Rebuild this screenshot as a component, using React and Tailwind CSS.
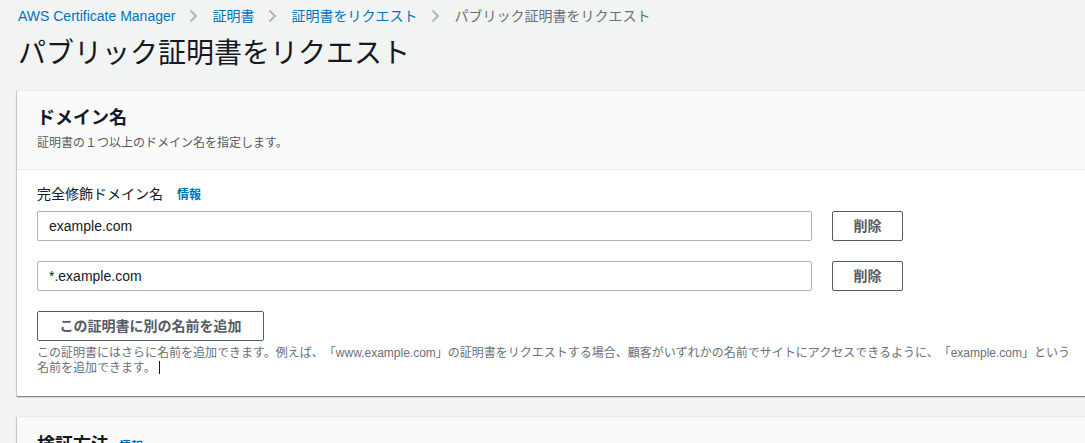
const FONT = "font-['Liberation_Sans','Noto_Sans_CJK_JP',sans-serif]";

const Chevron = () => (
  <svg width="9" height="14" viewBox="0 0 9 14" className="shrink-0">
    <path d="M1.5 1.5 L7 7 L1.5 12.5" fill="none" stroke="#aab7b8" strokeWidth="2" />
  </svg>
);

const crumbs = ['AWS Certificate Manager', '証明書', '証明書をリクエスト'];

const cardShadow =
  'shadow-[0_1px_1px_0_rgba(0,28,36,0.3),1px_1px_1px_0_rgba(0,28,36,0.15),-1px_1px_1px_0_rgba(0,28,36,0.15)]';

function DomainRow({ value }) {
  return (
    <div className="flex items-center">
      <input
        readOnly
        value={value}
        className="h-[30px] w-[775px] rounded-[2px] border border-[#aab7b8] bg-white pl-[11px] text-[14px] text-[#16191f] outline-none"
      />
      <button
        type="button"
        className="ml-[20px] h-[30px] w-[71px] rounded-[2px] border border-[#545b64] bg-white text-[14px] font-bold text-[#545b64]"
      >
        削除
      </button>
    </div>
  );
}

export default function App() {
  return (
    <div className={`${FONT} h-[443px] w-[1085px] overflow-hidden bg-[#f2f3f3] pl-[17px] text-[#16191f]`}>
      <nav className="flex items-center gap-[14px] pl-[1px] pt-[6px] text-[14px] leading-[20px]">
        {crumbs.map((c) => (
          <div key={c} className="flex items-center gap-[14px]">
            <span className="text-[#0073bb]">{c}</span>
            <Chevron />
          </div>
        ))}
        <span className="text-[#687078]">パブリック証明書をリクエスト</span>
      </nav>

      <h1 className="mt-[10px] pl-[1px] text-[28px] font-normal leading-[36px]">パブリック証明書をリクエスト</h1>

      <section className={`mt-[18px] w-[1100px] border-t border-[#eaeded] bg-white ${cardShadow}`}>
        <div className="border-b border-[#eaeded] bg-[#fafafa] px-[20px] pb-[18px] pt-[16px]">
          <h2 className="text-[18px] font-bold leading-[22px]">ドメイン名</h2>
          <p className="mt-[6px] text-[12px] leading-[16px] text-[#545b64]">証明書の１つ以上のドメイン名を指定します。</p>
        </div>
        <div className="px-[20px] pb-[20px] pt-[14px]">
          <div className="flex items-baseline gap-[14px] text-[14px] leading-[20px]">
            <span>完全修飾ドメイン名</span>
            <span className="text-[12px] font-bold text-[#0073bb]">情報</span>
          </div>
          <div className="mt-[6px] flex flex-col gap-[20px]">
            <DomainRow value="example.com" />
            <DomainRow value="*.example.com" />
          </div>
          <button
            type="button"
            className="mt-[20px] h-[30px] w-[227px] rounded-[2px] border border-[#545b64] bg-white text-[14px] font-bold text-[#545b64]"
          >
            この証明書に別の名前を追加
          </button>
          <p className="mt-[5px] w-[1048px] text-[12px] leading-[15px] text-[#687078] [text-spacing-trim:space-all]">
            この証明書にはさらに名前を追加できます。例えば、「www.example.com」の証明書をリクエストする場合、顧客がいずれかの名前でサイトにアクセスできるように、「example.com」という
            <br />
            名前を追加できます。
            <span className="ml-[3px] inline-block h-[13px] w-px bg-[#16191f] align-[-2px]" />
          </p>
        </div>
      </section>

      <section className={`mt-[20px] w-[1100px] border-t border-[#eaeded] bg-[#fafafa] ${cardShadow}`}>
        <div className="px-[20px] pb-[18px] pt-[17px]">
          <h2 className="flex items-baseline gap-[10px] text-[18px] font-bold leading-[22px]">
            検証方法
            <span className="text-[12px] text-[#0073bb]">情報</span>
          </h2>
        </div>
      </section>
    </div>
  );
}
